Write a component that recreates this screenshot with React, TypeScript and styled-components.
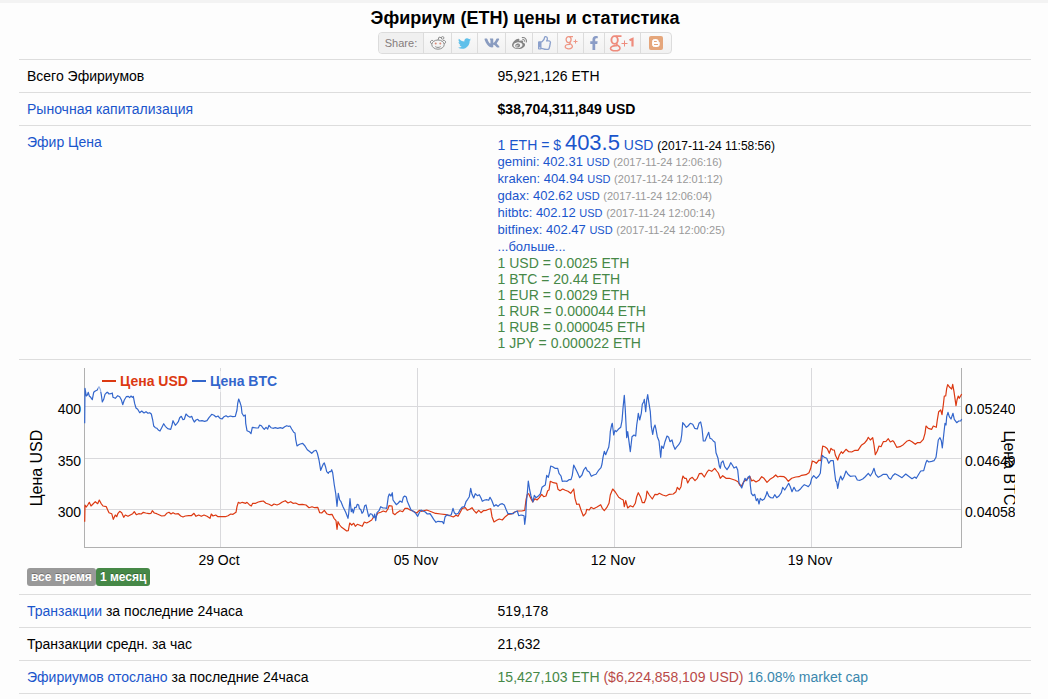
import React from "react";
import styled, { createGlobalStyle } from "styled-components";
import {
  FaTwitter,
  FaVk,
  FaWeibo,
  FaRegThumbsUp,
  FaFacebookF,
} from "react-icons/fa";

const GlobalStyle = createGlobalStyle`
  body {
    margin: 0;
    background: #fdfdfd;
    color: #000;
    font-family: "Liberation Sans", Arial, sans-serif;
    font-size: 14px;
    line-height: 16px;
  }
`;

const Page = styled.div`
  border-top: 3px solid #f3f3f3;
  padding: 4px 17px 5px 19px;
`;

const Header = styled.header`
  display: flex;
  flex-direction: column;
  align-items: center;
  gap: 3px;
  padding-bottom: 5px;
`;

const Title = styled.h1`
  margin: 0;
  font-size: 18px;
  line-height: 22px;
`;

const ShareBar = styled.div`
  display: flex;
  box-sizing: border-box;
  height: 22px;
  border: 1px solid #dcdcdc;
  border-radius: 4px;
  background: linear-gradient(#fafafa, #f1f1f1);
  overflow: hidden;
`;

const ShareLabel = styled.span`
  width: 44px;
  font-size: 11px;
  line-height: 20px;
  text-align: center;
  color: #857c7c;
  background: #f0f0f0;
`;

const ShareLink = styled.a<{ $color: string; $width: number }>`
  display: flex;
  align-items: center;
  justify-content: center;
  box-sizing: border-box;
  width: ${(p) => p.$width}px;
  border-left: 1px solid #dcdcdc;
  color: ${(p) => p.$color};
`;

const StatsTable = styled.table`
  width: 100%;
  border-spacing: 0;
  table-layout: fixed;

  tr:last-child > * {
    border-bottom: 1px solid #ddd;
  }
`;

const LabelColumn = styled.col`
  width: 46.5%;
`;

const Label = styled.th`
  padding: 8px;
  border-top: 1px solid #ddd;
  font-weight: normal;
  text-align: left;
  vertical-align: top;
`;

const Value = styled.td`
  padding: 8px;
  border-top: 1px solid #ddd;
  vertical-align: top;
`;

const Link = styled.a`
  color: #1a55cc;
  text-decoration: none;
`;

const Amount = styled.span<{ $color: string }>`
  color: ${(p) => p.$color};
`;

const MainPrice = styled.div`
  height: 19px;
  line-height: 18px;
`;

const BigFigure = styled.span`
  font-size: 22px;
`;

const PriceTime = styled.span`
  font-size: 12px;
`;

const ExchangeList = styled.ul`
  margin: 0;
  padding: 0;
  list-style: none;
  font-size: 13px;
`;

const ExchangeItem = styled.li`
  height: 17px;
  line-height: 18px;
`;

const Small = styled.span`
  font-size: 11px;
`;

const Timestamp = styled.time`
  font-size: 11px;
  color: #999;
`;

const RateList = styled.ul`
  margin: 0;
  padding: 0;
  list-style: none;
  color: #468847;
`;

const ChartSvg = styled.svg`
  display: block;
  width: 100%;
  height: auto;
  font-size: 14px;
`;

const PeriodBar = styled.div`
  display: flex;
`;

const PeriodButton = styled.button<{ $active?: boolean }>`
  height: 18px;
  padding: 0 4px;
  border: 0;
  border-radius: 3px;
  background: ${(p) => (p.$active ? "#468847" : "#999")};
  color: #fff;
  font: bold 12px/18px "Liberation Sans", Arial, sans-serif;
  text-shadow: 0 -1px 0 rgba(0, 0, 0, 0.25);
`;

const RedditIcon = () => (
  <svg width="18" height="14" viewBox="0 0 18 14" fill="none" stroke="#8d8d8d">
    <ellipse cx="9" cy="8.6" rx="6.2" ry="4.6" />
    <path d="M3 7.800A1.700 1.700 0 1 1 4.600 5.300M15 7.800A1.700 1.700 0 1 0 13.400 5.300" />
    <circle cx="13.6" cy="1.9" r="1.3" />
    <path d="M9 4l1-2.9 2.4.6M6.3 10.6c1.6 1.1 3.8 1.1 5.4 0" />
    <circle cx="6.7" cy="7.6" r="1" fill="#d98b77" stroke="none" />
    <circle cx="11.3" cy="7.6" r="1" fill="#d98b77" stroke="none" />
  </svg>
);

const GooglePlusIcon = () => (
  <svg width="16" height="16" viewBox="0 0 16 16" fill="none" stroke="#ee9684">
    <ellipse cx="5.600" cy="4.600" rx="2.500" ry="3" strokeWidth="1.300" />
    <path d="M6 1.600h4M7.400 7.300c-2.400 1.200 2 1.700 2 4 0 3.300-7.200 3.200-7.200.4 0-1.900 2.300-2.500 4.900-2.300" strokeWidth="1.300" />
    <path d="M10.500 6.500h4M12.500 4.500v4" />
  </svg>
);

const PlusOneIcon = () => (
  <svg width="28" height="18" viewBox="0 0 28 18" fill="none" stroke="#ee8b7c">
    <ellipse cx="5.600" cy="6" rx="3.200" ry="3.900" strokeWidth="1.900" />
    <path d="M6.500 2.100h6M8.500 9.600c-3 1.300 2.500 1.900 2.500 4.300 0 3.900-9.500 3.700-9.500.5 0-2.200 2.900-2.900 6.500-2.700" strokeWidth="1.600" />
    <path d="M12.500 9.500h6M15.500 6.500v6" />
    <path d="M20.500 6.300l3-1.300v7.500" strokeWidth="2.200" />
  </svg>
);

const BloggerIcon = () => (
  <svg width="14" height="14" viewBox="0 0 14 14">
    <rect width="14" height="14" rx="2" fill="#e5a67b" />
    <path
      d="M5.300 3.600h2.200a1.700 1.700 0 0 1 1.700 1.700c0 .7.3.9 1 1v2.500a1.700 1.700 0 0 1-1.700 1.700H5.300a1.700 1.700 0 0 1-1.700-1.700V5.300a1.700 1.700 0 0 1 1.700-1.700z"
      fill="#fff"
      stroke="#fff"
    />
    <path d="M5.400 5.500h2M5.400 8.500h3.200" stroke="#e5a67b" strokeLinecap="round" />
  </svg>
);

const shareLinks = [
  { name: "Reddit", width: 28, color: "#8d8d8d", icon: <RedditIcon /> },
  { name: "Twitter", width: 26, color: "#5fc0ea", icon: <FaTwitter size={13} /> },
  { name: "VK", width: 28, color: "#8a9cc0", icon: <FaVk size={16} /> },
  { name: "Weibo", width: 27, color: "#858585", icon: <FaWeibo size={15} /> },
  { name: "Like", width: 25, color: "#8ba0cc", icon: <FaRegThumbsUp size={14} /> },
  { name: "Google+", width: 26, color: "#ee9684", icon: <GooglePlusIcon /> },
  { name: "Facebook", width: 21, color: "#8a9cc6", icon: <FaFacebookF size={14} /> },
  { name: "Google +1", width: 36, color: "#ee8b7c", icon: <PlusOneIcon /> },
  { name: "Blogger", width: 31, color: "#e5a67b", icon: <BloggerIcon /> },
];

const exchanges = [
  { name: "gemini", price: "402.31", time: "2017-11-24 12:06:16" },
  { name: "kraken", price: "404.94", time: "2017-11-24 12:01:12" },
  { name: "gdax", price: "402.62", time: "2017-11-24 12:06:04" },
  { name: "hitbtc", price: "402.12", time: "2017-11-24 12:00:14" },
  { name: "bitfinex", price: "402.47", time: "2017-11-24 12:00:25" },
];

const rates = [
  "1 USD = 0.0025 ETH",
  "1 BTC = 20.44 ETH",
  "1 EUR = 0.0029 ETH",
  "1 RUR = 0.000044 ETH",
  "1 RUB = 0.000045 ETH",
  "1 JPY = 0.000022 ETH",
];

type Section = { x: number; y: number; samples: string };

const SAMPLES_PER_UNIT = 3;

const toPoints = (sections: Section[]) =>
  sections
    .flatMap(({ x, y, samples }) =>
      samples.split(" ").map((pair) => {
        const [sx, sy] = pair.split(",").map(Number);
        return `${(x + sx / SAMPLES_PER_UNIT).toFixed(1)},${(y + sy / SAMPLES_PER_UNIT).toFixed(1)}`;
      })
    )
    .join(" ");

const btcSeries: Section[] = [
  {
    x: -27,
    y: -8,
    samples:
      "254,190 255,85 259,108 262,105 265,97 268,108 272,112 277,119 281,97 286,93 292,90 297,80 301,88 304,104 307,126 311,118 315,103 322,96 327,102 333,101 337,99 339,112 346,115 353,107 359,110 364,119 368,134 373,120 379,110 385,109 389,113 393,108 397,112 400,109 404,131 408,144 413,148 419,158 425,153 432,159 438,155 444,160 449,158 454,162 458,180 461,198 466,203 471,205 475,210 480,213 485,203 491,191 496,199 503,206 512,208 516,195 519,182 526,196 531,190 535,185 539,173 544,169 549,179 553,178 558,162 565,169 570,172 575,169 578,177 583,186 588,180 593,178 598,183 606,182 614,184 621,182 627,173 632,167 635,163 642,166 648,171 654,168 660,175 666,177 672,170 678,167 684,171 691,168 698,170 706,169 711,150 713,130 716,117 721,130 724,140 726,160 731,168 736,165 737,190 741,212",
  },
  {
    x: 193,
    y: -8,
    samples:
      "88,215 93,221 97,202 103,203 109,204 115,204 119,195 124,197 129,204 133,208 138,202 143,207 147,196 153,203 159,205 166,203 173,205 181,203 188,205 194,200 200,197 205,199 210,198 215,207 221,217 225,219 227,238 231,258 236,254 241,252 248,250 255,258 262,269 268,274 275,280 282,273 288,271 292,279 297,300 302,331 306,321 310,312 313,309 317,322 320,335 325,340 328,335 332,335 335,329 338,339 343,375 347,400 351,439 355,400 359,420 363,425 369,440 377,457 384,475 386,460 390,416 394,455 397,447 400,459 404,442 408,443 412,433 416,435 418,445 423,450 426,460 430,455 434,437 438,435 442,452 446,470 451,461 456,463 461,473 464,462 467,482 471,458 477,452 482,440 489,444 495,444 500,445 505,410 508,402 513,408 517,398 519,420 524,427 529,434 535,429 540,423 546,427 550,412 554,408 559,411 562,424 567,436 573,450 580,454 587,460 593,469 598,458 603,450 609,453 616,456 622,462 630,461 636,470 641,478 648,487",
  },
  {
    x: 393,
    y: 2,
    samples:
      "54,454 62,455 67,455 71,461 75,441 81,434 87,437 94,434 99,415 103,428 108,433 115,430 121,418 127,411 133,410 138,395 143,388 148,380 152,355 156,373 161,384 166,371 172,377 178,374 183,384 187,394 194,390 201,389 206,391 210,382 215,391 222,409 228,404 234,409 240,403 247,401 253,405 259,420 264,431 272,431 280,431 286,425 292,423 296,437 303,435 308,436 312,437 314,463 317,440 319,400 322,370 325,333 329,360 333,378 339,396 343,376 348,383 354,379 361,372 366,352 371,348 376,345 380,316 385,322 389,305 392,288 398,290 405,295 413,295 417,310 423,318 427,334 434,333 441,334 447,329 453,329 457,316 461,285 466,295 472,307 479,323 486,315 491,300 497,292 502,302 508,306 514,319 521,315 528,313 535,302 543,293 546,282 549,262 553,244 557,254 561,244 566,232 569,210 571,185 575,164 577,160",
  },
  {
    x: 573,
    y: 2,
    samples:
      "41,195 45,181 49,185 55,178 62,172 66,152 69,115 73,76 76,120 80,203 83,185 87,215 91,245 96,200 102,195 107,198 110,165 113,145 115,130 119,150 124,130 127,103 131,95 133,88 137,125 140,90 143,74 146,95 151,125 154,170 158,193 161,175 165,165 168,178 172,200 177,213 182,262 185,228 190,235 195,215 201,198 206,202 210,215 216,210 220,225 225,238 229,232 236,224 242,214 245,195 248,158 254,165 259,172 264,168 271,160 278,163 284,175 292,177 297,160 302,156 306,175 310,213 315,213 320,200 326,187 330,205 335,207 340,213 345,217 348,248 354,265 358,288 361,295 364,278 369,273 374,290 381,299 387,290 392,278 397,285 402,294 409,290 413,300 417,338 421,345 425,354 430,340 435,325 440,332 444,322 449,318 451,345 454,370 459,377 464,373 469,392 473,386 477,402 481,385 487,391 493,387 498,376 501,365 506,378 512,383 519,384 524,374 530,383 537,378 544,368 548,352 554,360 560,350 566,340 571,350 576,365 582,352",
  },
  {
    x: 753,
    y: 2,
    samples:
      "48,363 54,363 62,356 67,350 73,344 80,347 85,350 91,342 95,325 101,317 109,325 116,318 121,310 124,280 127,256 133,262 140,265 146,280 152,272 160,272 163,300 167,333 170,335 173,355 178,330 182,318 187,330 192,320 198,303 204,313 211,319 220,318 226,318 232,330 240,331 248,327 255,321 265,310 271,318 277,308 282,295 287,313 295,322 302,318 310,313 320,313 327,325 332,328 338,317 345,311 354,316 366,323 377,312 388,320 396,326 404,321 409,325 417,311 422,303 431,302 437,280 441,271 446,276 455,274 462,272 468,262 471,240 475,210 480,203 484,212 487,234 491,195 495,160 498,165 500,140 504,127 508,140 513,147 519,130 523,148 530,158 536,153 542,153 545,147",
  },
];

const usdSeries: Section[] = [
  {
    x: -27,
    y: -8,
    samples:
      "254,485 255,435 259,441 263,435 268,427 273,438 279,432 286,425 293,431 298,420 303,430 309,438 319,440 323,450 327,458 335,461 340,478 346,465 350,470 354,460 359,454 365,458 371,472 376,465 384,469 391,465 398,461 403,455 409,464 416,461 424,462 430,457 437,459 447,461 453,460 457,452 463,459 470,461 477,464 485,468 494,467 500,460 507,457 513,462 519,458 526,462 535,461 542,468 549,471 556,468 566,467 574,467 582,460 588,469 596,465 604,469 612,465 621,469 630,475 634,462 639,468 647,465 654,470 662,470 676,470 684,467 692,462 699,463 708,457 711,440 715,427 720,430 727,427 737,430 741,427 748,434 754,438",
  },
  {
    x: 193,
    y: -8,
    samples:
      "98,430 107,430 115,426 123,424 130,423 138,430 147,433 155,437 162,432 171,435 178,432 187,426 196,422 204,429 212,425 219,430 227,429 237,434 247,433 258,435 267,443 276,440 284,443 293,442 299,458 305,459 313,451 320,461 328,464 336,463 342,475 348,482 351,508 354,485 359,495 364,501 371,506 380,513 385,512 389,489 395,495 401,490 406,499 412,493 418,495 427,499 433,486 440,489 447,485 455,480 461,470 467,472 473,460 482,457 490,453 498,456 504,446 507,437 516,438 519,460 525,464 531,458 540,452 548,455 555,445 562,445 570,450 578,453 590,459 598,451 604,454 620,450 634,455 645,460",
  },
  {
    x: 393,
    y: 2,
    samples:
      "48,430 62,432 78,434 90,437 100,441 108,436 114,439 120,428 127,415 136,413 142,421 149,418 156,413 162,422 169,429 176,421 183,428 190,422 199,421 206,418 212,416 216,440 222,456 230,451 238,447 247,450 256,440 265,433 275,432 283,427 293,423 305,423 314,421 318,390 322,373 326,371 332,385 338,396 345,386 351,390 358,383 365,373 371,380 378,378 383,362 387,360 391,334 400,338 410,340 414,358 420,362 428,357 436,361 444,364 452,370 461,357 465,385 470,403 477,402 483,420 490,438 497,430 500,418 508,420 513,412 521,416 531,411 542,404 547,415 553,422 560,413 567,400 571,375",
  },
  {
    x: 573,
    y: 2,
    samples:
      "38,357 46,366 56,382 64,387 70,390 73,410 77,392 83,414 91,407 99,411 106,400 110,380 115,368 122,382 127,398 133,398 138,385 141,363 148,375 157,387 165,373 172,374 178,370 188,375 198,378 208,373 220,372 228,365 232,352 238,359 243,350 246,330 249,318 254,325 259,325 263,339 270,326 277,322 285,332 292,325 298,311 305,310 313,321 320,308 326,300 335,304 344,295 350,303 355,309 361,325 368,317 378,325 388,325 397,328 406,331 414,335 419,345 424,349 431,335 438,330 444,325 450,320 455,333 460,330 468,336 477,331 485,320 492,325 501,337 510,328 520,322 527,315 533,321",
  },
  {
    x: 753,
    y: 2,
    samples:
      "0,319 12,320 18,325 25,334 35,325 47,321 57,320 65,316 78,314 87,308 92,295 97,273 103,275 109,280 117,270 122,272 125,250 128,228 136,231 142,236 148,250 153,235 158,240 163,240 166,255 173,270 178,255 184,245 188,250 198,238 206,245 215,246 225,241 234,241 244,226 253,220 261,210 265,202 271,210 278,203 282,225 286,254 292,243 297,228 303,230 310,215 318,214 325,206 331,216 338,212 342,216 350,232 360,230 370,224 380,214 388,211 396,215 406,223 412,218 421,218 430,208 435,190 438,168 445,175 455,178 460,168 469,172 472,150 476,125 482,120 486,134 490,105 493,78 497,78 500,55 503,44 509,52 515,57 518,43 522,65 528,107 531,90 535,78 538,85 545,72",
  },
];

const priceTicks = [
  { y: 38, usd: "400", btc: "0.05240" },
  { y: 90, usd: "350", btc: "0.04649" },
  { y: 141, usd: "300", btc: "0.04058" },
];

const dateTicks = [
  { x: 193, label: "29 Oct" },
  { x: 390, label: "05 Nov" },
  { x: 587, label: "12 Nov" },
  { x: 784, label: "19 Nov" },
];

const USD_COLOR = "#dc3912";
const BTC_COLOR = "#3366cc";

const PriceChart = () => (
  <ChartSvg viewBox="0 0 996 200" role="img" aria-label="Цена USD, Цена BTC">
    <clipPath id="plot">
      <rect width="988" height="200" />
    </clipPath>
    <g clipPath="url(#plot)">
      <g stroke="#d9d9dc" shapeRendering="crispEdges">
        {priceTicks.map((t) => (
          <line key={t.y} x1="57" x2="935" y1={t.y + 0.5} y2={t.y + 0.5} />
        ))}
        {dateTicks.map((t) => (
          <line key={t.x} x1={t.x + 0.5} x2={t.x + 0.5} y1="0" y2="179" />
        ))}
        <path d="M57.500 0V179.500H934.500V0" fill="none" stroke="#b0b0b0" />
      </g>
      <g fill="none" strokeWidth="1.200" strokeLinejoin="round">
        <polyline points={toPoints(usdSeries)} stroke={USD_COLOR} />
        <polyline points={toPoints(btcSeries)} stroke={BTC_COLOR} />
      </g>
      {priceTicks.map((t) => (
        <g key={t.usd}>
          <text x="54" y={t.y + 8} textAnchor="end">
            {t.usd}
          </text>
          <text x="938" y={t.y + 8}>
            {t.btc}
          </text>
        </g>
      ))}
      {dateTicks.map((t) => (
        <text key={t.label} x={t.x - 1} y="197" textAnchor="middle">
          {t.label}
        </text>
      ))}
      <g fontSize="16">
        <text transform="translate(15 100) rotate(-90)" textAnchor="middle">
          Цена USD
        </text>
        <text transform="translate(977 100) rotate(90)" textAnchor="middle">
          Цена BTC
        </text>
      </g>
      <rect x="71" y="3" width="182" height="21" fill="#fdfdfd" fillOpacity="0.5" />
      <g fontWeight="bold">
        <rect x="75" y="12" width="14" height="2" fill={USD_COLOR} />
        <text x="93" y="18" fill={USD_COLOR}>
          Цена USD
        </text>
        <rect x="165" y="12" width="14" height="2" fill={BTC_COLOR} />
        <text x="183" y="18" fill={BTC_COLOR}>
          Цена BTC
        </text>
      </g>
    </g>
  </ChartSvg>
);

export default function App() {
  return (
    <>
      <GlobalStyle />
      <Page>
        <Header>
          <Title>Эфириум (ETH) цены и статистика</Title>
          <ShareBar>
            <ShareLabel>Share:</ShareLabel>
            {shareLinks.map((s) => (
              <ShareLink key={s.name} href="#" aria-label={s.name} $color={s.color} $width={s.width}>
                {s.icon}
              </ShareLink>
            ))}
          </ShareBar>
        </Header>
        <StatsTable>
          <colgroup>
            <LabelColumn />
            <col />
          </colgroup>
          <tbody>
            <tr>
              <Label scope="row">Всего Эфириумов</Label>
              <Value>95,921,126 ETH</Value>
            </tr>
            <tr>
              <Label scope="row">
                <Link href="#">Рыночная капитализация</Link>
              </Label>
              <Value>
                <b>$38,704,311,849 USD</b>
              </Value>
            </tr>
            <tr>
              <Label scope="row">
                <Link href="#">Эфир Цена</Link>
              </Label>
              <Value>
                <MainPrice>
                  <Link href="#">
                    1 ETH = $ <BigFigure>403.5</BigFigure> USD
                  </Link>{" "}
                  <PriceTime>(2017-11-24 11:58:56)</PriceTime>
                </MainPrice>
                <ExchangeList>
                  {exchanges.map((e) => (
                    <ExchangeItem key={e.name}>
                      <Link href="#">
                        {e.name}: {e.price} <Small>USD</Small>
                      </Link>{" "}
                      <Timestamp>({e.time})</Timestamp>
                    </ExchangeItem>
                  ))}
                  <ExchangeItem>
                    <Link href="#">...больше...</Link>
                  </ExchangeItem>
                </ExchangeList>
                <RateList>
                  {rates.map((r) => (
                    <li key={r}>{r}</li>
                  ))}
                </RateList>
              </Value>
            </tr>
            <tr>
              <Value colSpan={2}>
                <PriceChart />
                <PeriodBar>
                  <PeriodButton>все время</PeriodButton>
                  <PeriodButton $active>1 месяц</PeriodButton>
                </PeriodBar>
              </Value>
            </tr>
            <tr>
              <Label scope="row">
                <Link href="#">Транзакции</Link> за последние 24часа
              </Label>
              <Value>519,178</Value>
            </tr>
            <tr>
              <Label scope="row">Транзакции средн. за час</Label>
              <Value>21,632</Value>
            </tr>
            <tr>
              <Label scope="row">
                <Link href="#">Эфириумов отослано</Link> за последние 24часа
              </Label>
              <Value>
                <Amount $color="#468847">15,427,103 ETH</Amount>{" "}
                <Amount $color="#b94a48">($6,224,858,109 USD)</Amount>{" "}
                <Amount $color="#3a87ad">16.08% market cap</Amount>
              </Value>
            </tr>
          </tbody>
        </StatsTable>
      </Page>
    </>
  );
}
